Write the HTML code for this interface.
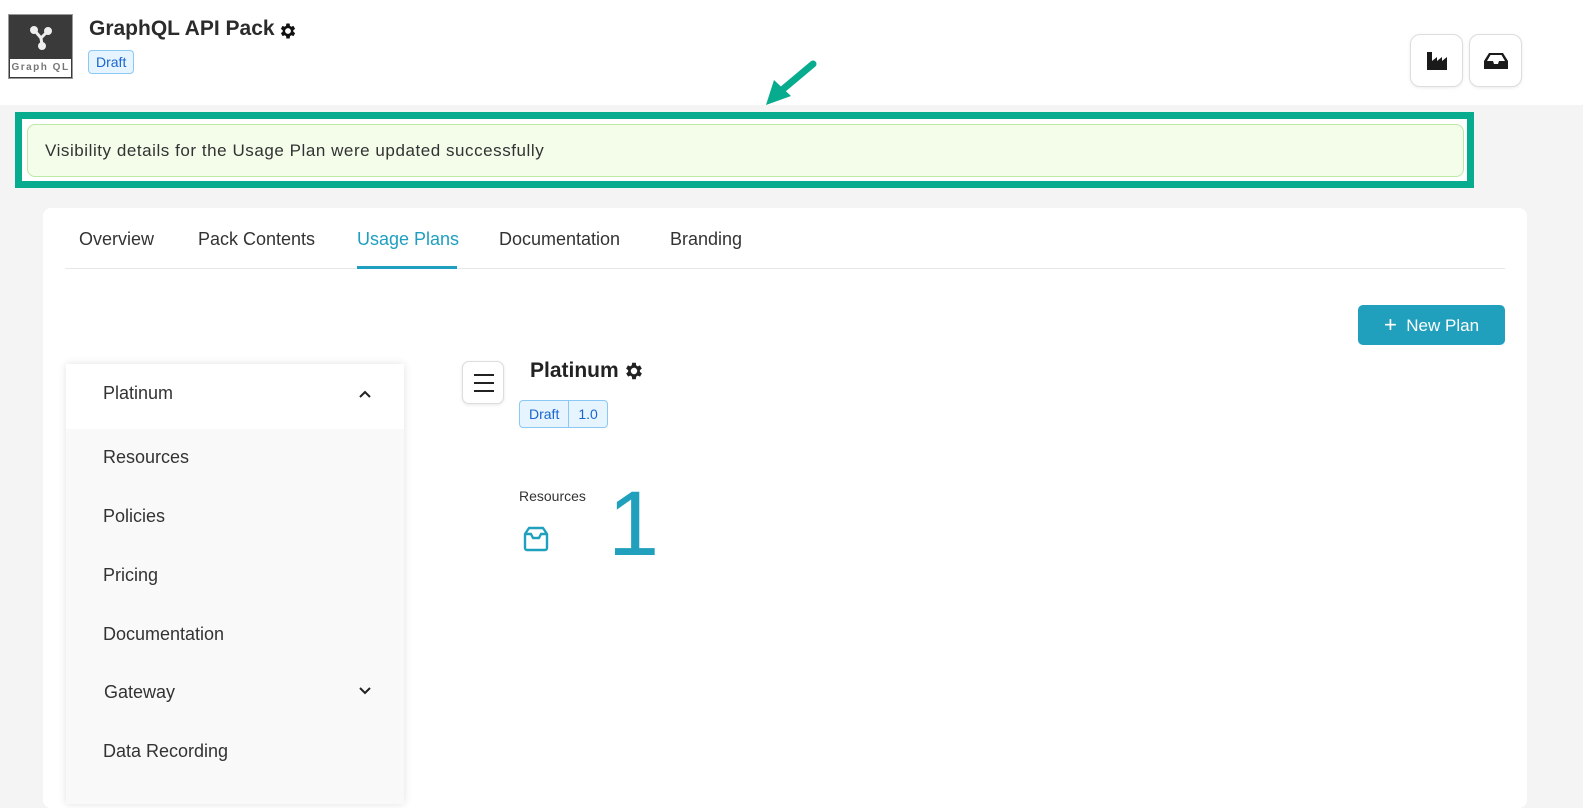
<!DOCTYPE html>
<html><head><meta charset="utf-8"><style>
*{box-sizing:border-box;margin:0;padding:0}
body{width:1583px;height:787px;overflow:hidden;background:#f4f4f4;font-family:"Liberation Sans",sans-serif;color:#333;position:relative}
.abs{position:absolute}
.header{left:0;top:0;width:1583px;height:105px;background:#fff}
.logo{left:8px;top:14px;width:65px;height:65px;background:#3a3a3a;border:1px solid #999}
.logo .lbl{position:absolute;left:1px;right:1px;bottom:1px;height:18px;background:#fff;font-size:10px;letter-spacing:1.5px;color:#777;text-align:center;line-height:18px;font-weight:bold}
.title{left:89px;top:17px;font-size:21px;font-weight:bold;color:#2b2b2b}
.tag{border:1px solid #8cc8f5;background:#e6f4ff;color:#1a66d0;font-size:14px;border-radius:4px;line-height:22px;padding:0 7px}
.sqbtn{width:53px;height:53px;border:1px solid #ddd;border-radius:10px;background:#fff;box-shadow:0 1px 3px rgba(0,0,0,.08);display:flex;align-items:center;justify-content:center}
.teal{left:15px;top:112px;width:1459px;height:76px;border:7px solid #07ab8e;background:#fff}
.alert{left:27px;top:124px;width:1437px;height:53px;border:1px solid #bde8a6;background:#f3fdea;border-radius:8px;font-size:17px;letter-spacing:0.55px;color:#333;line-height:51px;padding-left:17px}
.card{left:43px;top:208px;width:1484px;height:600px;background:#fff;border-radius:8px}
.tab{top:229px;font-size:18px;color:#333}
.side{left:66px;top:364px;width:338px;height:440px;background:#f9f9f9;box-shadow:0 0 8px rgba(0,0,0,.12)}
.side .it{position:absolute;left:37px;font-size:18px;color:#333}
</style></head><body>
<div class="abs header"></div>
<div class="abs logo">
<svg width="63" height="44" viewBox="0 0 63 44" style="position:absolute;left:0;top:0"><g stroke="#eee" stroke-width="3" fill="#eee" stroke-linecap="round"><line x1="26" y1="16" x2="32" y2="23"/><line x1="38" y1="17" x2="32" y2="23"/><line x1="32" y1="23" x2="33" y2="30"/><circle cx="25" cy="15" r="2.5"/><circle cx="39" cy="16" r="2.5"/><circle cx="33" cy="31" r="2.5"/></g></svg>
<div class="lbl">Graph QL</div></div>
<div class="abs title">GraphQL API Pack</div>
<svg class="abs" style="left:278px;top:21px" width="20" height="20" viewBox="0 0 24 24"><path fill="#111" d="M19.4 13a7.5 7.5 0 0 0 0-2l2.1-1.6-2-3.5-2.5 1a7 7 0 0 0-1.7-1L15 3h-4l-.4 2.9a7 7 0 0 0-1.7 1l-2.5-1-2 3.5L6.6 11a7.5 7.5 0 0 0 0 2l-2.1 1.6 2 3.5 2.5-1a7 7 0 0 0 1.7 1L11 21h4l.4-2.9a7 7 0 0 0 1.7-1l2.5 1 2-3.5zM13 15.5a3.5 3.5 0 1 1 0-7 3.5 3.5 0 0 1 0 7z" transform="translate(-1 0)"/></svg>
<div class="abs tag" style="left:88px;top:50px">Draft</div>
<div class="abs sqbtn" style="left:1410px;top:34px"><svg width="22" height="20" viewBox="0 0 22 20"><path fill="#1a1a1a" d="M1 1h5v9l5-4v4l5-4v4l5-4v13H1z"/></svg></div>
<div class="abs sqbtn" style="left:1469px;top:34px"><svg width="26" height="20" viewBox="0 0 26 20"><path fill="#1a1a1a" d="M6 2h14l5 8v8H1v-8zM4 10h6l1 3h4l1-3h6l-3.5-6h-11z"/></svg></div>
<svg class="abs" style="left:760px;top:56px" width="60" height="52" viewBox="0 0 60 52"><line x1="53" y1="8" x2="22" y2="34" stroke="#07ab8e" stroke-width="7" stroke-linecap="round"/><polygon points="6,49 14,24 31,40" fill="#07ab8e"/></svg>
<div class="abs teal"></div>
<div class="abs alert">Visibility details for the Usage Plan were updated successfully</div>
<div class="abs card"></div>
<div class="abs tab" style="left:79px">Overview</div>
<div class="abs tab" style="left:198px">Pack Contents</div>
<div class="abs tab" style="left:357px;color:#1f9fbf">Usage Plans</div>
<div class="abs tab" style="left:499px">Documentation</div>
<div class="abs tab" style="left:670px">Branding</div>
<div class="abs" style="left:65px;top:268px;width:1440px;height:1px;background:#e8e8e8"></div>
<div class="abs" style="left:357px;top:266px;width:100px;height:3px;background:#1f9fbf"></div>
<div class="abs" style="left:1358px;top:305px;width:147px;height:40px;background:#21a0bd;border-radius:5px;color:#fff;font-size:17px;line-height:40px;text-align:center"><span style="font-size:22px;font-weight:300;vertical-align:-1px">+</span>&nbsp; New Plan</div>
<div class="abs side">
<div style="position:absolute;left:0;top:0;width:338px;height:65px;background:#fff"></div>
<div class="it" style="top:19px">Platinum</div>
<svg style="position:absolute;left:292px;top:25px" width="14" height="10" viewBox="0 0 14 10"><path d="M2 8l5-5 5 5" stroke="#222" stroke-width="2" fill="none"/></svg>
<div class="it" style="top:83px">Resources</div>
<div class="it" style="top:142px">Policies</div>
<div class="it" style="top:201px">Pricing</div>
<div class="it" style="top:260px">Documentation</div>
<div class="it" style="top:318px;left:38px">Gateway</div>
<svg style="position:absolute;left:292px;top:322px" width="14" height="10" viewBox="0 0 14 10"><path d="M2 2l5 5 5-5" stroke="#222" stroke-width="2" fill="none"/></svg>
<div class="it" style="top:377px">Data Recording</div>
</div>
<div class="abs" style="left:462px;top:361px;width:42px;height:43px;border:1px solid #ddd;border-radius:7px;background:#fff;box-shadow:0 1px 3px rgba(0,0,0,.1)">
<svg width="40" height="41" viewBox="0 0 40 41"><g stroke="#222" stroke-width="2"><line x1="11" y1="13" x2="31" y2="13"/><line x1="11" y1="21" x2="31" y2="21"/><line x1="11" y1="29" x2="31" y2="29"/></g></svg></div>
<div class="abs" style="left:530px;top:359px;font-size:21px;font-weight:bold;color:#222">Platinum</div>
<svg class="abs" style="left:623px;top:360px" width="22" height="22" viewBox="0 0 24 24"><path fill="#222" d="M19.4 13a7.5 7.5 0 0 0 0-2l2.1-1.6-2-3.5-2.5 1a7 7 0 0 0-1.7-1L15 3h-4l-.4 2.9a7 7 0 0 0-1.7 1l-2.5-1-2 3.5L6.6 11a7.5 7.5 0 0 0 0 2l-2.1 1.6 2 3.5 2.5-1a7 7 0 0 0 1.7 1L11 21h4l.4-2.9a7 7 0 0 0 1.7-1l2.5 1 2-3.5zM13 15.5a3.5 3.5 0 1 1 0-7 3.5 3.5 0 0 1 0 7z" transform="translate(-1 0)"/></svg>
<div class="abs" style="left:519px;top:400px;height:28px;display:flex;border:1px solid #8cc8f5;border-radius:4px;background:#e6f4ff;color:#1a66d0;font-size:14px;line-height:26px">
<span style="padding:0 9px;border-right:1px solid #8cc8f5">Draft</span><span style="padding:0 9px">1.0</span></div>
<div class="abs" style="left:519px;top:488px;font-size:14px;color:#333">Resources</div>
<svg class="abs" style="left:522px;top:525px" width="28" height="28" viewBox="0 0 28 28"><path d="M7 3h14l4 6v14a2 2 0 0 1-2 2H5a2 2 0 0 1-2-2V9zM3 9h6l2 4h6l2-4h6" stroke="#21a0bd" stroke-width="2.4" fill="none" stroke-linejoin="round"/></svg>
<div class="abs" style="left:608px;top:478px;font-size:92px;font-weight:300;color:#21a0bd;line-height:1">1</div>
</body></html>
